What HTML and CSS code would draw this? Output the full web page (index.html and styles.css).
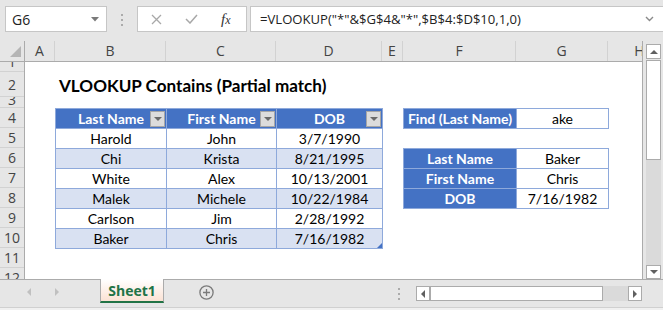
FILE: index.html
```html
<!DOCTYPE html>
<html lang="en">
<head>
    <meta charset="UTF-8">
    <title>VLOOKUP Contains (Partial match)</title>
    <link rel="stylesheet" href="styles.css">
</head>
<body>
    <div class="app">
        <!-- formula bar -->
        <div class="formula-bar">
            <div class="name-box">
                <span>G6</span>
                <svg width="8" height="5" viewBox="0 0 8 5"><polygon points="0,0 8,0 4,4.5" fill="#7a7a7a"/></svg>
            </div>
            <div class="splitter"><i></i><i></i><i></i></div>
            <div class="fx-buttons">
                <svg class="btn-cancel" width="11" height="11" viewBox="0 0 11 11"><path d="M1 1L10 10M10 1L1 10" stroke="#a8a8a8" stroke-width="1.3" fill="none"/></svg>
                <svg class="btn-enter" width="13" height="10" viewBox="0 0 13 10"><path d="M1 5L5 9L12 1" stroke="#a8a8a8" stroke-width="1.5" fill="none"/></svg>
                <span class="fx"><i>f</i><i class="fx-x">x</i></span>
            </div>
            <div class="formula-input">
                <span>=VLOOKUP("*"&amp;$G$4&amp;"*",$B$4:$D$10,1,0)</span>
                <svg class="chevron" width="9" height="6" viewBox="0 0 9 6"><path d="M1 1L4.5 4.5L8 1" stroke="#8a8a8a" stroke-width="1.4" fill="none"/></svg>
            </div>
        </div>

        <div class="workspace">
            <div class="sheet">
                <div class="col-headers">
                    <div class="corner">
                        <svg width="24" height="20" viewBox="0 0 24 20"><polygon points="10,16 21,16 21,5" fill="#b5b5b5"/></svg>
                    </div>
                    <div class="col-hdr col-a">A</div>
                    <div class="col-hdr col-b">B</div>
                    <div class="col-hdr col-c">C</div>
                    <div class="col-hdr col-d">D</div>
                    <div class="col-hdr col-e">E</div>
                    <div class="col-hdr col-f">F</div>
                    <div class="col-hdr col-g">G</div>
                    <div class="col-hdr col-h">H</div>
                </div>

                <div class="sheet-body">
                    <div class="row-headers">
                        <div class="row-hdr row-thin">1</div>
                        <div class="row-hdr row-title">2</div>
                        <div class="row-hdr row-gap">3</div>
                        <div class="row-hdr">4</div>
                        <div class="row-hdr">5</div>
                        <div class="row-hdr">6</div>
                        <div class="row-hdr">7</div>
                        <div class="row-hdr">8</div>
                        <div class="row-hdr">9</div>
                        <div class="row-hdr">10</div>
                        <div class="row-hdr">11</div>
                        <div class="row-hdr">12</div>
                    </div>

                    <div class="cells">
                        <div class="title">VLOOKUP Contains (Partial match)</div>

                        <table class="xl-table data-table">
                            <colgroup><col class="w-b"><col class="w-c"><col class="w-d"></colgroup>
                            <tr>
                                <th>Last Name<span class="filter-btn"></span></th>
                                <th>First Name<span class="filter-btn"></span></th>
                                <th>DOB<span class="filter-btn"></span></th>
                            </tr>
                            <tr><td>Harold</td><td>John</td><td>3/7/1990</td></tr>
                            <tr class="band"><td>Chi</td><td>Krista</td><td>8/21/1995</td></tr>
                            <tr><td>White</td><td>Alex</td><td>10/13/2001</td></tr>
                            <tr class="band"><td>Malek</td><td>Michele</td><td>10/22/1984</td></tr>
                            <tr><td>Carlson</td><td>Jim</td><td>2/28/1992</td></tr>
                            <tr class="band last-row"><td>Baker</td><td>Chris</td><td class="resize-corner">7/16/1982</td></tr>
                        </table>

                        <table class="xl-table find-table">
                            <colgroup><col class="w-f"><col class="w-g"></colgroup>
                            <tr><th>Find (Last Name)</th><td>ake</td></tr>
                        </table>

                        <table class="xl-table result-table">
                            <colgroup><col class="w-f"><col class="w-g"></colgroup>
                            <tr><th>Last Name</th><td>Baker</td></tr>
                            <tr><th>First Name</th><td>Chris</td></tr>
                            <tr><th>DOB</th><td>7/16/1982</td></tr>
                        </table>
                    </div>
                </div>
            </div>

            <div class="vscroll">
                <div class="sb-btn"><span class="tri-up"></span></div>
                <div class="sb-thumb-v"></div>
                <div class="sb-track"></div>
                <div class="sb-btn sb-btn-down"><span class="tri-down"></span></div>
            </div>
        </div>

        <div class="tab-bar">
            <div class="tab-nav">
                <span class="tri-left"></span>
                <span class="tri-right"></span>
            </div>
            <div class="sheet-tab">Sheet1</div>
            <div class="add-sheet">
                <svg width="15" height="15" viewBox="0 0 15 15"><circle cx="7.5" cy="7.5" r="6.6" stroke="#7a7a7a" stroke-width="1.3" fill="none"/><path d="M7.5 4V11M4 7.5H11" stroke="#7a7a7a" stroke-width="1.3"/></svg>
            </div>
            <div class="splitter h-split"><i></i><i></i><i></i></div>
            <div class="hscroll">
                <div class="sb-btn"><span class="tri-left dark"></span></div>
                <div class="sb-thumb-h"></div>
                <div class="sb-track"></div>
                <div class="sb-btn"><span class="tri-right dark"></span></div>
            </div>
        </div>
        <div class="status-bar"></div>
    </div>
</body>
</html>
```

FILE: styles.css
```css
* {
    box-sizing: border-box;
}
body {
    margin: 0;
    font-family: "Open Sans", "Noto Sans", sans-serif;
    background-color: #e6e6e6;
    overflow: hidden;
}
.app {
    width: 663px;
    height: 310px;
    display: flex;
    flex-direction: column;
    background-color: #e6e6e6;
}

/* formula bar */
.formula-bar {
    height: 41px;
    display: flex;
    align-items: flex-start;
    padding: 6px 0 0 5px;
    flex-shrink: 0;
}
.name-box {
    width: 102px;
    height: 26px;
    background: #fff;
    border: 1px solid #c6c6c6;
    display: flex;
    align-items: center;
    justify-content: space-between;
    padding: 0 7px 0 6px;
    font-size: 14px;
    color: #222;
}
.splitter {
    width: 30px;
    height: 26px;
    display: flex;
    flex-direction: column;
    align-items: center;
    gap: 3px;
    padding-top: 8px;
}
.splitter i {
    width: 2px;
    height: 2px;
    background: #ababab;
}
.fx-buttons {
    width: 110px;
    height: 26px;
    background: #fff;
    border: 1px solid #c6c6c6;
    display: flex;
    align-items: center;
    padding-left: 13px;
}
.btn-enter {
    margin-left: 23px;
}
.fx {
    margin-left: 23px;
    font-family: "Liberation Serif", serif;
    font-size: 15px;
    color: #333;
}
.fx-x {
    font-size: 12px;
}
.formula-input {
    flex: 1;
    height: 26px;
    margin-left: 3px;
    background: #fff;
    border: 1px solid #c6c6c6;
    border-right: none;
    display: flex;
    align-items: center;
    padding-left: 9px;
    font-size: 13.1px;
    color: #222;
    white-space: nowrap;
}
.chevron {
    margin-left: auto;
    margin-right: 9px;
}

/* sheet */
.workspace {
    height: 238px;
    display: flex;
    flex-shrink: 0;
}
.sheet {
    width: 643px;
    display: flex;
    flex-direction: column;
    background: #fff;
    border-right: 1px solid #ababab;
}
.col-headers {
    height: 21px;
    display: flex;
    background: #e6e6e6;
    border-bottom: 1px solid #ababab;
    overflow: hidden;
    flex-shrink: 0;
}
.corner {
    width: 25px;
    flex-shrink: 0;
    border-right: 1px solid #ababab;
}
.corner svg {
    display: block;
}
.col-hdr {
    flex-shrink: 0;
    border-right: 1px solid #d2d2d2;
    text-align: center;
    font-size: 14px;
    line-height: 20px;
    color: #444;
}
.col-a { width: 30px; }
.col-b { width: 111px; }
.col-c { width: 110px; }
.col-d { width: 106px; }
.col-e { width: 21px; }
.col-f { width: 113px; }
.col-g { width: 92px; }
.col-h { width: 64px; }

.sheet-body {
    flex: 1;
    display: flex;
    overflow: hidden;
}
.row-headers {
    width: 25px;
    flex-shrink: 0;
    background: #e6e6e6;
    border-right: 1px solid #ababab;
    display: flex;
    flex-direction: column;
}
.row-hdr {
    height: 20px;
    flex-shrink: 0;
    border-bottom: 1px solid #d2d2d2;
    display: flex;
    align-items: center;
    justify-content: center;
    overflow: hidden;
    font-size: 14px;
    line-height: 19px;
    color: #444;
}
.row-thin {
    height: 10px;
    align-items: flex-end;
}
.row-title {
    height: 25px;
}
.row-gap {
    height: 11px;
    align-items: flex-end;
    line-height: 14px;
}

.cells {
    flex: 1;
    display: grid;
    grid-template-columns: 30px 111px 110px 106px 21px 113px 92px 64px;
    grid-template-rows: 10px 25px 11px repeat(9, 20px);
    overflow: hidden;
}
.title {
    grid-column: 2 / 7;
    grid-row: 2;
    padding: 0 0 1px 4px;
    display: flex;
    align-items: flex-end;
    font-family: Lato, "Liberation Sans", sans-serif;
    font-weight: bold;
    font-size: 17.1px;
    color: #000;
    white-space: nowrap;
}

/* Excel tables */
.xl-table {
    border-collapse: collapse;
    table-layout: fixed;
    font-family: Lato, "Liberation Sans", sans-serif;
    font-size: 14px;
    color: #000;
}
.xl-table tr {
    height: 20px;
}
.xl-table th,
.xl-table td {
    border: 1px solid #8ea9db;
    padding: 0;
    text-align: center;
    line-height: 18px;
    white-space: nowrap;
}
.xl-table th {
    background: #4472c4;
    color: #fff;
    font-weight: bold;
}
.w-b { width: 111px; }
.w-c { width: 110px; }
.w-d { width: 106px; }
.w-f { width: 113px; }
.w-g { width: 92px; }

.data-table {
    grid-column: 2 / 5;
    grid-row: 4 / 11;
    width: 327px;
}
.data-table th {
    position: relative;
}
.band td {
    background: #d9e1f2;
}
.filter-btn {
    position: absolute;
    right: 1px;
    top: 2px;
    width: 15px;
    height: 16px;
    background: #dcdcdc;
    border: 1px solid #a6a6a6;
}
.filter-btn::after {
    content: "";
    position: absolute;
    left: 3px;
    top: 5px;
    border-left: 4px solid transparent;
    border-right: 4px solid transparent;
    border-top: 4px solid #6a6a6a;
}
.resize-corner {
    position: relative;
}
.resize-corner::after {
    content: "";
    position: absolute;
    right: 0;
    bottom: 0;
    border-left: 5px solid transparent;
    border-bottom: 5px solid #4472c4;
}
.find-table {
    grid-column: 6 / 8;
    grid-row: 4;
    width: 205px;
}
.result-table {
    grid-column: 6 / 8;
    grid-row: 6 / 9;
    width: 205px;
}

/* scroll bars */
.vscroll {
    width: 20px;
    display: flex;
    flex-direction: column;
    padding: 3px 2px 0 3px;
}
.sb-btn {
    width: 15px;
    height: 15px;
    flex-shrink: 0;
    background: #fff;
    border: 1px solid #ababab;
    display: flex;
    align-items: center;
    justify-content: center;
}
.sb-btn-down {
    height: 14px;
}
.sb-thumb-v {
    height: 100px;
    margin-top: 1px;
    background: #fff;
    border: 1px solid #ababab;
}
.sb-track {
    flex: 1;
    background: #dadada;
}
.tri-up {
    border-left: 4px solid transparent;
    border-right: 4px solid transparent;
    border-bottom: 4px solid #606060;
}
.tri-down {
    border-left: 4px solid transparent;
    border-right: 4px solid transparent;
    border-top: 4px solid #606060;
}
.tri-left {
    border-top: 4px solid transparent;
    border-bottom: 4px solid transparent;
    border-right: 4px solid #c0c0c0;
}
.tri-right {
    border-top: 4px solid transparent;
    border-bottom: 4px solid transparent;
    border-left: 4px solid #c0c0c0;
}
.tri-left.dark {
    border-right-color: #606060;
}
.tri-right.dark {
    border-left-color: #606060;
}

/* sheet tabs */
.tab-bar {
    height: 28px;
    display: flex;
    align-items: flex-start;
    border-top: 1px solid #ababab;
    flex-shrink: 0;
}
.tab-nav {
    width: 100px;
    display: flex;
    gap: 24px;
    padding: 8px 0 0 27px;
}
.sheet-tab {
    width: 64px;
    height: 24px;
    margin-top: -1px;
    background: linear-gradient(#ffffff, #fbe2d4);
    border-left: 1px solid #ababab;
    border-right: 1px solid #ababab;
    border-bottom: 2px solid #217346;
    text-align: center;
    font-size: 14px;
    font-weight: bold;
    line-height: 23px;
    color: #217346;
}
.add-sheet {
    margin: 5px 0 0 35px;
}
.add-sheet svg {
    display: block;
}
.h-split {
    width: 2px;
    margin-left: 184px;
    padding-top: 8px;
    height: 22px;
}
.hscroll {
    width: 226px;
    height: 15px;
    margin: 6px 0 0 16px;
    display: flex;
}
.hscroll .sb-btn {
    width: 14px;
}
.sb-thumb-h {
    width: 173px;
    background: #fff;
    border: 1px solid #ababab;
}
.status-bar {
    flex: 1;
    background: #f0f0f0;
    border-top: 1px solid #d0d0d0;
}
```
